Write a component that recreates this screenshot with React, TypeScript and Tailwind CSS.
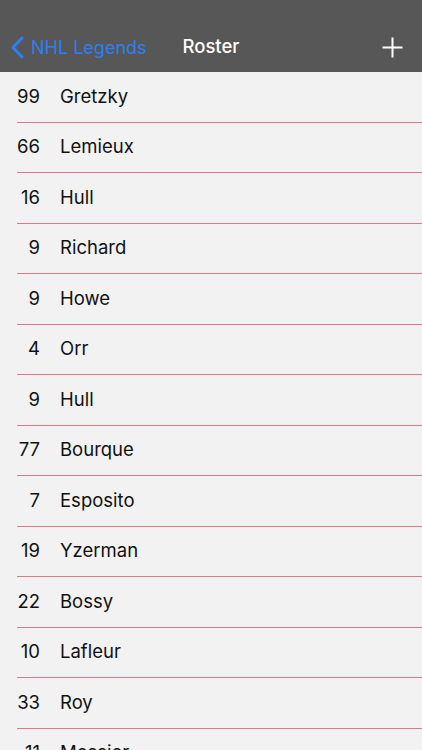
const players: [number, string][] = [
  [99, "Gretzky"],
  [66, "Lemieux"],
  [16, "Hull"],
  [9, "Richard"],
  [9, "Howe"],
  [4, "Orr"],
  [9, "Hull"],
  [77, "Bourque"],
  [7, "Esposito"],
  [19, "Yzerman"],
  [22, "Bossy"],
  [10, "Lafleur"],
  [33, "Roy"],
  [11, "Messier"],
];

export default function App() {
  return (
    <div className="h-[750px] w-full overflow-hidden bg-[#f2f2f2] font-['Inter','Liberation_Sans',sans-serif]">
      <div className="h-[72px] bg-[#575757] pt-[26px]">
        <div className="relative flex h-[42px] items-center justify-between pl-[10px] pr-[19px]">
          <div className="flex items-center gap-[7px] text-[18px] text-[#2b80f2]">
            <svg width="14" height="23" viewBox="0 0 14 23" fill="none">
              <path d="M12 2 L3 11.5 L12 21" stroke="#2b80f2" strokeWidth="3" strokeLinecap="round" strokeLinejoin="round" />
            </svg>
            <span>NHL Legends</span>
          </div>
          <span className="absolute left-1/2 -translate-x-1/2 text-[18.5px] font-medium text-white">Roster</span>
          <svg width="21" height="21" viewBox="0 0 21 21" fill="none">
            <path d="M10.5 0.5 V20.5 M0.5 10.5 H20.5" stroke="#ffffff" strokeWidth="2" />
          </svg>
        </div>
      </div>
      <ul className="flex flex-col">
        {players.map(([num, name], i) => (
          <li key={i} className="ml-[17px] flex h-[50.5px] items-center border-b border-[#e07a88] text-[18.5px] text-[#111]">
            <span className="w-[23px] text-right">{num}</span>
            <span className="ml-[20px]">{name}</span>
          </li>
        ))}
      </ul>
    </div>
  );
}
